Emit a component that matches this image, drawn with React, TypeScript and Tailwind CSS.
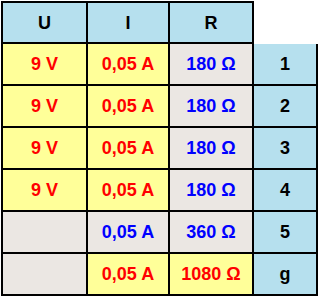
import React from "react";

type Cell = { t: string; c: string; bg: string };

const Y = "bg-[#ffff99]";
const G = "bg-[#ebe7e3]";
const B = "bg-[#b6e0ee]";
const RED = "text-[#ff0000]";
const BLU = "text-[#0000ff]";
const BLK = "text-black";

const rows: Cell[][] = [
  [
    { t: "9 V", c: RED, bg: Y },
    { t: "0,05 A", c: RED, bg: Y },
    { t: "180 Ω", c: BLU, bg: G },
    { t: "1", c: BLK, bg: B },
  ],
  [
    { t: "9 V", c: RED, bg: Y },
    { t: "0,05 A", c: RED, bg: Y },
    { t: "180 Ω", c: BLU, bg: G },
    { t: "2", c: BLK, bg: B },
  ],
  [
    { t: "9 V", c: RED, bg: Y },
    { t: "0,05 A", c: RED, bg: Y },
    { t: "180 Ω", c: BLU, bg: G },
    { t: "3", c: BLK, bg: B },
  ],
  [
    { t: "9 V", c: RED, bg: Y },
    { t: "0,05 A", c: RED, bg: Y },
    { t: "180 Ω", c: BLU, bg: G },
    { t: "4", c: BLK, bg: B },
  ],
  [
    { t: "", c: BLK, bg: G },
    { t: "0,05 A", c: BLU, bg: G },
    { t: "360 Ω", c: BLU, bg: G },
    { t: "5", c: BLK, bg: B },
  ],
  [
    { t: "", c: BLK, bg: G },
    { t: "0,05 A", c: RED, bg: Y },
    { t: "1080 Ω", c: RED, bg: Y },
    { t: "g", c: BLK, bg: B },
  ],
];

export default function App() {
  return (
    <div
      className="w-[318px] h-[296px] bg-white pt-[1px] pl-[1px] font-bold text-[18px] leading-none"
      style={{ fontFamily: '"Liberation Sans", Arial, sans-serif' }}
    >
      <div className="flex flex-col">
        <div className="grid grid-cols-[83px_80px_82px] gap-[2px] bg-black pt-[2px] px-[2px] pb-[2px] w-[253px] h-[43px]">
          {["U", "I", "R"].map((h) => (
            <div key={h} className={`${B} flex items-center justify-center text-black h-[39px]`}>
              {h}
            </div>
          ))}
        </div>
        <div className="grid grid-cols-[83px_80px_82px_62px] auto-rows-[40px] gap-[2px] bg-black px-[2px] pb-[2px] w-[317px]">
          {rows.flat().map((cell, i) => (
            <div key={i} className={`${cell.bg} ${cell.c} flex items-center justify-center`}>
              {cell.t}
            </div>
          ))}
        </div>
      </div>
    </div>
  );
}
